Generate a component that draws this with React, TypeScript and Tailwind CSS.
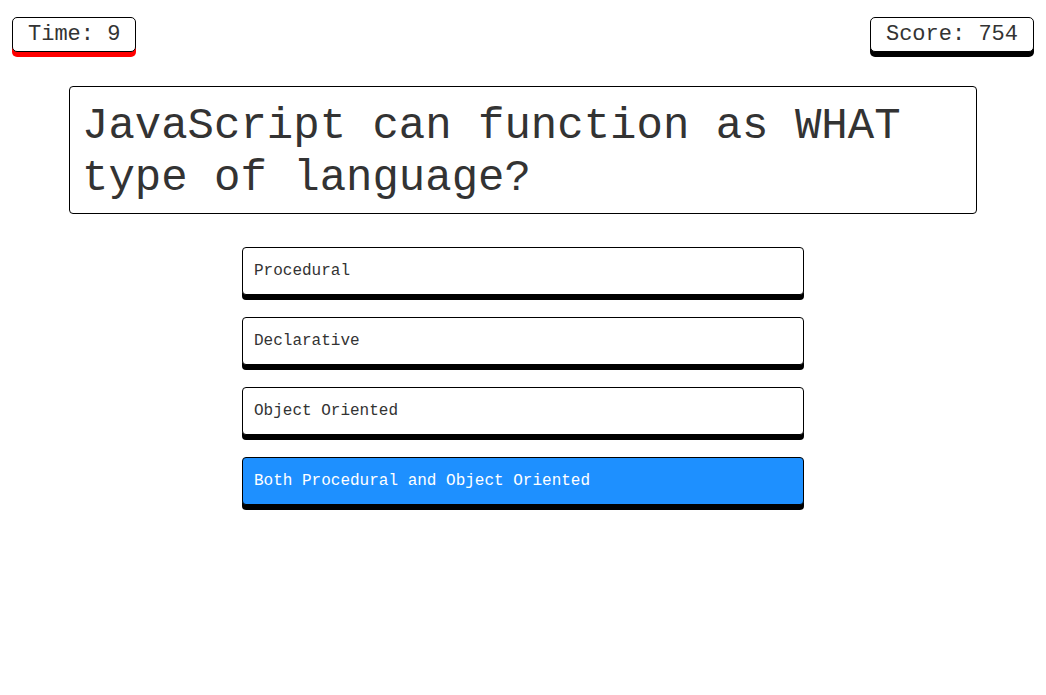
const answers = [
  "Procedural",
  "Declarative",
  "Object Oriented",
  "Both Procedural and Object Oriented",
];

export default function App() {
  const selected = 3;

  return (
    <div className="min-h-[695px] w-full bg-white font-['Liberation_Mono','Courier_New',monospace] text-[#333]">
      {/* header: timer + score */}
      <div className="flex items-start justify-between px-3 pt-[17px]">
        <div className="rounded-[5px] border border-black bg-white px-[15px] py-1 text-[22px] leading-[25px] shadow-[0_5px_0_red]">
          Time: 9
        </div>
        <div className="rounded-[5px] border border-black bg-white px-[15px] py-1 text-[22px] leading-[25px] shadow-[0_5px_0_black]">
          Score: 754
        </div>
      </div>

      {/* question */}
      <div className="mx-[69px] mt-[34px] rounded-[4px] border border-black px-3 pt-[13px] pb-[9px] text-[44px] leading-[52px]">
        JavaScript can function as WHAT type of language?
      </div>

      {/* answers */}
      <div className="mx-auto mt-[33px] flex w-[562px] flex-col gap-[22px]">
        {answers.map((a, i) => (
          <button
            key={a}
            className={
              i === selected
                ? "flex h-[48px] items-center rounded-[4px] border border-black bg-[#1e90ff] pl-[11px] text-left text-[16px] text-white shadow-[0_5px_0_black]"
                : "flex h-[48px] items-center rounded-[4px] border border-black bg-white pl-[11px] text-left text-[16px] text-[#333] shadow-[0_5px_0_black]"
            }
          >
            {a}
          </button>
        ))}
      </div>
    </div>
  );
}
